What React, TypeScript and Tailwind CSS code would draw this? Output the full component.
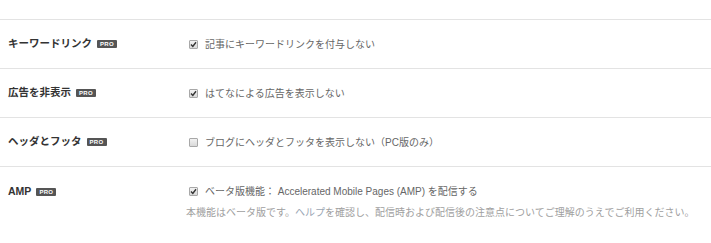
import React from "react";

const font = { fontFamily: '"Liberation Sans", "Noto Sans CJK JP", sans-serif' };

function Pro() {
  return (
    <span className="ml-[5px] inline-flex h-[8px] w-[20px] items-center justify-center rounded-[1px] bg-[#555] text-[6px] font-bold leading-none tracking-[0.3px] text-white">
      PRO
    </span>
  );
}

function Check({ checked }: { checked: boolean }) {
  return (
    <span className="ml-[3px] mr-[7px] flex h-[9px] w-[9px] shrink-0 items-center justify-center rounded-[1px] border border-[#a8a8a8] bg-gradient-to-b from-[#f2f2f2] to-[#d9d9d9]">
      {checked && (
        <svg width="7" height="7" viewBox="0 0 7 7">
          <path d="M1 3.6 L2.8 5.4 L6 1.3" fill="none" stroke="#333" strokeWidth="1.4" />
        </svg>
      )}
    </span>
  );
}

function Row({
  label,
  text,
  checked,
  note,
}: {
  label: string;
  text: React.ReactNode;
  checked: boolean;
  note?: React.ReactNode;
}) {
  return (
    <div
      className={`flex border-t border-[#e3e3e3] ${note ? "h-[77px] items-start pt-[17px]" : "h-[49px] items-center"}`}
    >
      <div className="flex w-[186px] shrink-0 items-center pl-[8px] text-[10.5px] font-bold text-[#333]">
        <span>{label}</span>
        <Pro />
      </div>
      <div className="flex flex-col">
        <div className="flex items-center text-[10px] text-[#666]">
          <Check checked={checked} />
          <span>{text}</span>
        </div>
        {note && <div className="mt-[6px] text-[10px] text-[#a0a0a0]">{note}</div>}
      </div>
    </div>
  );
}

export default function App() {
  return (
    <div className="h-[243px] w-[711px] overflow-hidden bg-white" style={font}>
      <div className="h-[19px]" />
      <Row label="キーワードリンク" text="記事にキーワードリンクを付与しない" checked />
      <Row label="広告を非表示" text="はてなによる広告を表示しない" checked />
      <Row label="ヘッダとフッタ" text="ブログにヘッダとフッタを表示しない（PC版のみ）" checked={false} />
      <Row
        label="AMP"
        text="ベータ版機能： Accelerated Mobile Pages (AMP) を配信する"
        checked
        note={
          <>
            本機能はベータ版です。<span className="text-[#9aa6b4]">ヘルプ</span>を確認し、配信時および配信後の注意点についてご理解のうえでご利用ください。
          </>
        }
      />
    </div>
  );
}
